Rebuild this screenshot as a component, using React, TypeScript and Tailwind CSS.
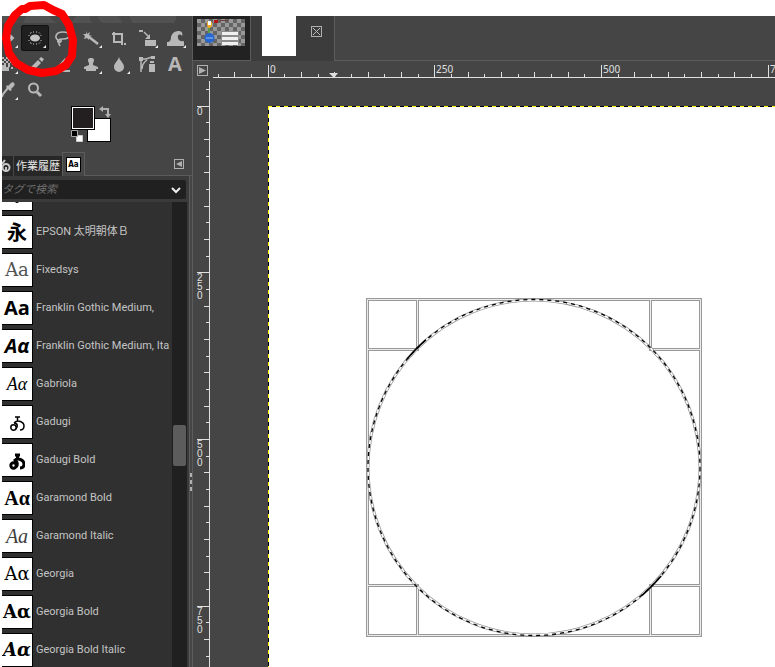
import type { ReactNode } from 'react';

const fonts = [
  { name: 'EPSON 太明朝体Ｂ', sample: '永', style: 'font-["Noto_Sans_CJK_JP",sans-serif] font-bold text-xl text-black' },
  { name: 'Fixedsys', sample: 'Aa', style: 'font-["DejaVu_Serif",serif] text-lg text-neutral-600' },
  { name: 'Franklin Gothic Medium,', sample: 'Aa', style: 'font-["Open_Sans",sans-serif] font-bold text-xl text-black' },
  { name: 'Franklin Gothic Medium, Ita', sample: 'Aα', style: 'font-["Open_Sans",sans-serif] font-bold italic text-xl text-black' },
  { name: 'Gabriola', sample: 'Aα', style: 'font-["Liberation_Serif",serif] italic text-lg text-black' },
  { name: 'Gadugi', sample: '', style: '' },
  { name: 'Gadugi Bold', sample: '', style: '' },
  { name: 'Garamond Bold', sample: 'Aα', style: 'font-["Liberation_Serif",serif] font-bold text-xl text-black' },
  { name: 'Garamond Italic', sample: 'Aa', style: 'font-["Liberation_Serif",serif] italic text-xl text-neutral-700' },
  { name: 'Georgia', sample: 'Aα', style: 'font-["DejaVu_Serif",serif] text-lg text-black' },
  { name: 'Georgia Bold', sample: 'Aα', style: 'font-["DejaVu_Serif",serif] font-bold text-lg text-black' },
  { name: 'Georgia Bold Italic', sample: 'Aα', style: 'font-["DejaVu_Serif",serif] font-bold italic text-lg text-black' },
];

const tools: { label: string; menu?: boolean; icon: ReactNode }[] = [
  {
    label: '移動',
    menu: true,
    icon: <path d="M6 13h14M17 10l3 3-3 3" fill="none" stroke="currentColor" strokeWidth="2" />,
  },
  {
    label: '楕円選択',
    menu: true,
    icon: (
      <>
        <ellipse cx="14" cy="13" rx="5" ry="3.5" />
        <path d="M9 8.500 10.500 7.500M12 7h1M15 7h1M18 7.500 19 8.500M9 17.500 10.500 18.500M12 19h1M15 19h1M18 18.500 19 17.500M8 10v1M20 10v1M8 15v1M20 15v1" fill="none" stroke="currentColor" />
      </>
    ),
  },
  {
    label: '自由選択',
    icon: (
      <path d="M9 15c-4-3-2-8 5-8 8 0 8 7 0 7-4 0-6 2-5 3s4 0 3-2-4 1-1 6" fill="none" stroke="currentColor" strokeWidth="1.600" />
    ),
  },
  {
    label: 'ファジー選択',
    menu: true,
    icon: (
      <>
        <path d="m9 6 1 3 3-2-1 3 3 1-3 1 0 3-2-2-3 1 1-3-2-2 3 0z" />
        <path d="m12 12 9 7" stroke="currentColor" strokeWidth="2.500" />
      </>
    ),
  },
  {
    label: '切り抜き',
    icon: (
      <>
        <path d="M9 7v10h8M7 9h10v11" fill="none" stroke="currentColor" strokeWidth="2" />
        <path d="M19 18h2v2h-2z" />
      </>
    ),
  },
  {
    label: '変形',
    menu: true,
    icon: (
      <>
        <path d="M6 5h4v2H6zM12 15h11v6H12zM17 9v5h-5z" />
        <path d="m11 7 5 5" stroke="currentColor" strokeWidth="1.500" />
      </>
    ),
  },
  {
    label: 'ワープ変形',
    menu: true,
    icon: <path d="M6 21v-4c3 0 4-2 4-5 1-4 4-6 8-6 3 0 4 3 3 5-2-3-5-1-4 2 0 2 3 4 6 3v5z" />,
  },
  {
    label: 'グラデーション',
    menu: true,
    icon: (
      <path d="M9 6h2v2H9zM13 6h2v2h-2zM17 6h2v2h-2zM11 8h2v2h-2zM15 8h2v2h-2zM19 8h2v2h-2zM9 10h2v2H9zM13 10h2v2h-2zM17 10h2v2h-2zM11 12h2v2h-2zM15 12h2v2h-2zM19 12h2v2h-2zM9 14h4v2H9zM15 14h2v2h-2zM9 16h7v4H9zM18 16h2v2h-2z" />
    ),
  },
  {
    label: '鉛筆',
    icon: (
      <>
        <path d="m9 17 8-8 3 3-8 8-4 1z" />
        <path d="m18 8 2-2 3 2-2 3z" />
      </>
    ),
  },
  {
    label: '消しゴム',
    icon: <path d="m8 16 8-9 5 5-6 7h6v2H11z" />,
  },
  {
    label: 'スタンプ',
    menu: true,
    icon: <path d="M14 7c3 0 4 2 2 5v2l5 2v2H7v-2l5-2v-2c-2-3-1-5 2-5zM9 18h10v2H9z" />,
  },
  {
    label: 'ぼかし',
    menu: true,
    icon: <path d="M14 6c1 4 5 6 5 10a5 5 0 0 1-10 0c0-4 4-6 5-10z" />,
  },
  {
    label: 'パス',
    icon: (
      <>
        <path d="M6 6h4v4H6zM18 5h4v3h-4zM16 13h6v8h-6zM17 10h4v2h-4z" />
        <path d="M10 8h3l6-2M8 10v11M9 18c0-5 2-7 5-9" fill="none" stroke="currentColor" strokeWidth="1.500" />
      </>
    ),
  },
  {
    label: 'テキスト',
    icon: (
      <text x="14" y="20" textAnchor="middle" className='font-["Open_Sans",sans-serif] text-xl font-bold'>
        A
      </text>
    ),
  },
  {
    label: 'スポイト',
    menu: true,
    icon: (
      <>
        <path d="m15 9 3-3c2-2 5 1 3 3l-3 3 1 1-2 1-4-4 1-2z" />
        <path d="m15 11-5 6-1 3" fill="none" stroke="currentColor" strokeWidth="2" />
      </>
    ),
  },
  {
    label: 'ズーム',
    icon: (
      <g fill="none" stroke="currentColor">
        <circle cx="12.500" cy="11" r="4.500" strokeWidth="2" />
        <path d="m16 15 4 4" strokeWidth="3" />
      </g>
    ),
  },
];

const Toolbox = () => (
  <section className="h-[136px] shrink-0">
    <svg className="block h-[9px] w-full" aria-hidden="true">
      <path d="M0 0h174v3l-2 4H0z" fill="#525252" />
      <path d="M16 0h8l-3 7H8c5-1 7-4 8-7zM48 0h26c-1 3-4 5-7 7H55c-4-2-6-4-7-7zM88 0h8c0 3 2 5 5 7H90c-2-3-3-5-2-7zM117 0h10l4 7h-11z" fill="#484848" />
    </svg>
    <div className="-ml-[9px] grid w-[196px] grid-cols-7">
      {tools.map((tool, i) => (
        <button
          key={tool.label}
          type="button"
          aria-label={tool.label}
          className={i === 1 ? 'h-[26px] rounded-xs border border-[#111] bg-[#1f1f1f]' : 'h-[26px]'}
        >
          <svg viewBox="0 0 28 26" className={i === 1 ? '-m-px block h-[26px] w-7 text-[#c4c4c4]' : 'block h-[26px] w-7 text-[#b8b8b8]'} fill="currentColor">
            {tool.icon}
            {tool.menu && <path d="M25 20v3h-3z" fill="#eee" />}
          </svg>
        </button>
      ))}
    </div>
    <div className="relative -mt-px ml-[69px] h-10 w-10">
      <button type="button" aria-label="背景色" className="absolute right-0 bottom-0 size-6 border border-black bg-white" />
      <button type="button" aria-label="描画色" className="absolute top-1 left-0 size-6 border border-black bg-[#231f20] outline-1 -outline-offset-2 outline-white" />
      <button type="button" aria-label="色の初期化" className="absolute bottom-0 left-0 size-3">
        <svg viewBox="0 0 12 12" className="block size-3">
          <path d="M5.500 5.500h6v6h-6z" fill="#fff" stroke="#ccc" />
          <path d="M.5.5h6v6h-6z" fill="#000" stroke="#aaa" />
        </svg>
      </button>
      <button type="button" aria-label="色の入れ替え" className="absolute top-1 right-0 size-3">
        <svg viewBox="0 0 12 12" className="block size-3 text-[#b0b0b0]" fill="currentColor">
          <path d="M4 0v6L0 3zM6 8h6l-3 4z" />
          <path d="M3 3h6v6" fill="none" stroke="currentColor" strokeWidth="2" />
        </svg>
      </button>
    </div>
  </section>
);

const DockTabs = () => (
  <nav className="flex h-6 shrink-0 items-end">
    <button type="button" aria-label="デバイスの状態" className="h-5 w-3 overflow-hidden border-r border-[#484848] bg-[#272727]">
      <svg viewBox="0 0 12 20" className="block h-5 w-3" fill="none" stroke="#c8c8c8" strokeWidth="2">
        <circle cx="4" cy="11.500" r="3.500" />
        <path d="M4 11v3M0 8l3-4" />
      </svg>
    </button>
    <button type="button" className="h-5 w-12 bg-[#272727] text-center text-[11px] whitespace-nowrap text-[#e6e6e6]">
      作業履歴
    </button>
    <button type="button" aria-label="フォント" className="flex h-6 w-[23px] items-center justify-center border border-b-0 border-[#5c5c5c]">
      <span className='flex size-[15px] items-center justify-center border border-black bg-white font-["DejaVu_Sans_Condensed","DejaVu_Sans",sans-serif] text-[8px] font-bold text-black'>
        Aa
      </span>
    </button>
    <div className="flex h-full flex-1 items-center justify-end border-b border-[#5c5c5c] pr-2">
      <button type="button" aria-label="タブの設定" className="flex size-[10px] items-center justify-center border border-[#b0b0b0]">
        <svg viewBox="0 0 6 6" className="size-[6px]" fill="#b0b0b0">
          <path d="M6 0v6L0 3z" />
        </svg>
      </button>
    </div>
  </nav>
);

const GadugiGlyph = ({ bold }: { bold: boolean }) => (
  <svg viewBox="0 0 16 18" className="mt-1 h-[18px] w-4" fill="none" stroke="#000" strokeWidth={bold ? 3 : 1.5}>
    <path d="M6 2h5M8.500 2v4M5 8c4-4 10-1 10 3 0 3-2 4-4 4" />
    <circle cx="4.500" cy="12.500" r="2.700" />
    <path d="M5 8c4 0 4 4 2 6" />
  </svg>
);

const FontList = () => (
  <div className="flex min-h-0 flex-1 overflow-hidden bg-[#303030]">
    <ul className='-mt-[27px] min-w-0 flex-1 font-["Roboto","Noto_Sans_CJK_JP",sans-serif] text-[11px] text-[#c4c4c4]'>
      <li className="h-[38px] py-0.5">
        <div className="flex h-[34px] w-[31px] items-end justify-center border border-l-0 border-black bg-white">
          <span className="mb-[7px] h-2 w-1 rounded-full bg-black" />
        </div>
      </li>
      {fonts.map(({ name, sample, style }) => (
        <li key={name}>
          <button type="button" className="flex h-[38px] w-full items-center gap-[3px] overflow-hidden">
            <span className={`flex h-[34px] w-[31px] shrink-0 items-center justify-center overflow-hidden border border-l-0 border-black bg-white leading-none ${style}`}>
              {sample || <GadugiGlyph bold={name.endsWith('Bold')} />}
            </span>
            <span className="whitespace-nowrap">{name}</span>
          </button>
        </li>
      ))}
    </ul>
    <div className="w-[15px] bg-[#202020] px-px pt-[223px]">
      <div className="h-[41px] rounded-xs bg-[#5c5c5c]" />
    </div>
  </div>
);

const Dock = () => (
  <aside className="relative flex w-[190px] shrink-0 flex-col overflow-hidden bg-[#454545]">
    <Toolbox />
    <DockTabs />
    <div className="mr-0.5 flex min-h-0 flex-1 flex-col border-r border-[#5c5c5c] bg-[#3a3a3a] pt-1 pr-0.5">
      <div className="mr-px mb-[3px] flex h-[19px] shrink-0 items-center rounded-r-xs bg-[#202020] pr-[5px]">
        <input
          aria-label="タグで検索"
          placeholder="タグで検索"
          className="min-w-0 flex-1 text-[11px] italic outline-none placeholder:text-[#6c6c6c]"
        />
        <button type="button" aria-label="タグ一覧">
          <svg viewBox="0 0 10 8" className="block h-2 w-[10px]" fill="none" stroke="#eee" strokeWidth="2">
            <path d="m1 2 4 4 4-4" />
          </svg>
        </button>
      </div>
      <FontList />
    </div>
    <div className="absolute right-0 bottom-44 grid gap-[3px]">
      <span className="h-1 w-0.5 bg-[#b0b0b0]" />
      <span className="h-1 w-0.5 bg-[#b0b0b0]" />
      <span className="h-1 w-0.5 bg-[#b0b0b0]" />
    </div>
  </aside>
);

const ImageTabs = () => (
  <nav className="flex h-[45px] shrink-0">
    <button type="button" aria-label="画像 1" className="flex w-[58px] items-start border-r border-b border-[#5c5c5c] bg-[#222] pt-[3px] pl-1">
      <svg viewBox="0 0 48 27" className="block h-[27px] w-12">
        <defs>
          <pattern id="checks" width="8" height="8" patternUnits="userSpaceOnUse">
            <path d="M0 0h8v8H0z" fill="#656565" />
            <path d="M0 0h4v4H0zM4 4h4v4H4z" fill="#999" />
          </pattern>
        </defs>
        <path d="M0 0h48v27H0z" fill="url(#checks)" />
        <path d="M17 1h4v3h-4z" fill="#b31414" />
        <path d="M23 1h8v1h-8z" fill="#70403c" />
        <path d="M11 9h2v6h-2z" fill="#5c9a48" />
        <path d="M10 3h5v4l-2 2h-2l-1-2z" fill="#eda825" />
        <path d="M11 2h3v4h-3z" fill="#fff" />
        <circle cx="12.500" cy="19" r="5" fill="#2867cf" />
        <path d="M9 19h7" stroke="#9bbcf0" />
        <path d="M24 12h18v14H24z" fill="#8c8c8c" />
        <path d="M25 13h16v3H25zM25 18h16v3H25zM25 23h16v3H25z" fill="#f0f0f0" />
      </svg>
    </button>
    <div className="flex w-[83px] justify-between bg-[#3c3c3c] pr-3 pl-[11px]">
      <div className="h-10 w-[34px] bg-white" />
      <button type="button" aria-label="閉じる" className="mt-[10px] size-[11px] border border-[#b0b0b0]">
        <svg viewBox="0 0 9 9" className="block size-[9px]" stroke="#c0c0c0">
          <path d="m1 1 7 7M8 1 1 8" />
        </svg>
      </button>
    </div>
    <div className="flex-1 border-b border-l border-[#5c5c5c] bg-[#454545]" />
  </nav>
);

// one tick every 25px of the image at 66.7% zoom
const ticks = Array.from({ length: 41 }, (_, i) => i - 3);
const tickPos = (n: number, origin: number) => origin + Math.round((n * 50) / 3 - 0.2) + 0.5;
const tickSize = (n: number) => (n % 10 === 0 ? 12 : n % 2 === 0 ? 5 : 3);

const HorizontalRuler = () => (
  <svg className="block h-[17px] w-full" fill="#e0e0e0" stroke="none">
    <path d="M3 16h2000v1H3z" />
    {ticks.map((n) => (
      <path key={n} d={`M${tickPos(n, 58)} 16v-${tickSize(n)}`} stroke="#e0e0e0" />
    ))}
    {[0, 10, 20, 30].map((n) => (
      <text key={n} x={tickPos(n, 60) - 0.5} y="12" className="text-[10px]">
        {n * 25}
      </text>
    ))}
    <path d="M119 12h9l-4 5z" />
  </svg>
);

const VerticalRuler = () => (
  <svg className="block h-full w-[17px]" fill="#e0e0e0">
    <path d="M16 3h1v2000h-1z" />
    {ticks.filter((n) => n > -2).map((n) => (
      <path key={n} d={`M16 ${tickPos(n, 28)}h-${tickSize(n)}`} stroke="#e0e0e0" />
    ))}
    {[0, 10, 20, 30].map((n) =>
      String(n * 25)
        .split('')
        .map((digit, i) => (
          <text key={`${n}-${i}`} x="4" y={tickPos(n, 28) + 9 + i * 9 - 0.5} className='font-["Liberation_Sans",sans-serif] text-[10px]'>
            {digit}
          </text>
        )),
    )}
  </svg>
);

const frame = 'M99.5 193.5h333v336h-333zM149.5 193.5v50h-50M382.500 193.500v50h50M99.500 479.500h50v50M432.500 479.500h-50v50';

const Selection = () => (
  <svg className="block h-full w-full" fill="none">
    <path d={frame} stroke="#999" strokeWidth="3" />
    <path d={frame} stroke="#ececec" />
    <ellipse cx="266" cy="361.500" rx="166" ry="167.500" stroke="#999" strokeWidth="3" />
    <ellipse cx="266" cy="361.500" rx="166" ry="167.500" stroke="#fff" strokeWidth="1.500" />
    <ellipse cx="266" cy="361.500" rx="166" ry="168" stroke="#000" strokeWidth="1.300" strokeDasharray="4 4" />
    <path d="M139 252.900A166.500 168 0 0 1 158 233.600M393 470.100A166.500 168 0 0 1 374 489.400" stroke="#000" strokeWidth="1.500" />
    <path d="M0 .5h2000M.5 0v2000" stroke="#000" />
    <path d="M0 .5h2000M.5 0v2000" stroke="#ff0" strokeDasharray="4 4" />
  </svg>
);

const ImageWindow = () => (
  <main className="flex min-w-0 flex-1 flex-col border-l border-[#5c5c5c] bg-[#454545]">
    <ImageTabs />
    <div className="grid min-h-0 flex-1 grid-cols-[17px_1fr] grid-rows-[17px_minmax(0,1fr)]">
      <button type="button" aria-label="画像メニュー" className="mt-1 ml-1 flex size-[11px] items-center justify-center border border-[#b0b0b0]">
        <svg viewBox="0 0 7 7" className="size-[7px]" fill="#b0b0b0">
          <path d="M0 0v7l7-3.500z" />
        </svg>
      </button>
      <HorizontalRuler />
      <VerticalRuler />
      <div className="overflow-hidden pt-7 pl-[58px]">
        <div className="h-full bg-white">
          <Selection />
        </div>
      </div>
    </div>
  </main>
);

export default function App() {
  return (
    <div className='relative flex h-screen overflow-hidden bg-white pt-4 pl-0.5 font-["Noto_Sans","Noto_Sans_CJK_JP",sans-serif]'>
      <Dock />
      <ImageWindow />
      <svg className="pointer-events-none absolute top-0 left-0 h-20 w-20" fill="none" stroke="#f00" strokeWidth="8" strokeLinecap="round" strokeLinejoin="round">
        <path d="M25 9 30 6 44 5 53 10 62 14 69 25 73 40 72 56 66 65 56 71 42 73 28 70 16 63 9 53 6 38 8 26 15 15 22 9z" />
      </svg>
    </div>
  );
}
